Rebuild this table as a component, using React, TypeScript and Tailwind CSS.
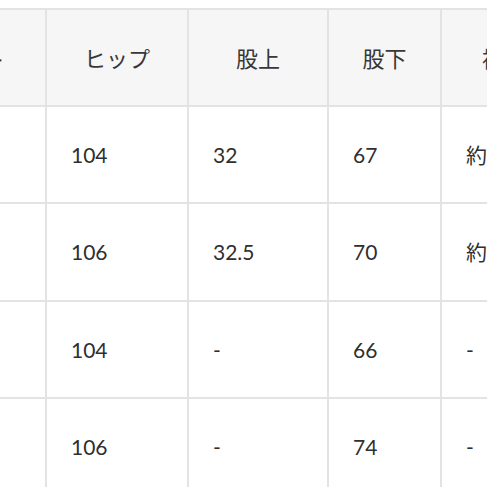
import React from 'react';

const headers = ['ウエスト', 'ヒップ', '股上', '股下', '裾幅'];

const rows: string[][] = [
  ['', '104', '32', '67', '約21'],
  ['', '106', '32.5', '70', '約22'],
  ['', '104', '-', '66', '-'],
  ['', '106', '-', '74', '-'],
];

const rowHeights = ['h-[95px]', 'h-[96px]', 'h-[95px]', 'h-[95px]'];

export default function App() {
  return (
    <div className="w-[487px] h-[487px] overflow-hidden bg-white pt-2">
      <div
        className="ml-[-125px] w-max bg-[#e3e3e3] p-[2px] grid grid-cols-[168px_140px_138px_111px_124px] gap-[2px]"
        style={{ fontFamily: 'Lato, "Noto Sans CJK JP", sans-serif' }}
      >
        {headers.map((h) => (
          <div
            key={h}
            className="h-[95px] bg-[#f6f6f6] flex items-center justify-center text-[22px] text-[#383838]"
            style={{ fontFamily: '"Noto Sans CJK JP", sans-serif' }}
          >
            {h}
          </div>
        ))}
        {rows.map((row, i) =>
          row.map((cell, j) => (
            <div
              key={`${i}-${j}`}
              className={`${rowHeights[i]} bg-white flex items-center pl-6 text-[21px] text-[#2f2f2f]`}
            >
              {cell}
            </div>
          ))
        )}
      </div>
    </div>
  );
}
